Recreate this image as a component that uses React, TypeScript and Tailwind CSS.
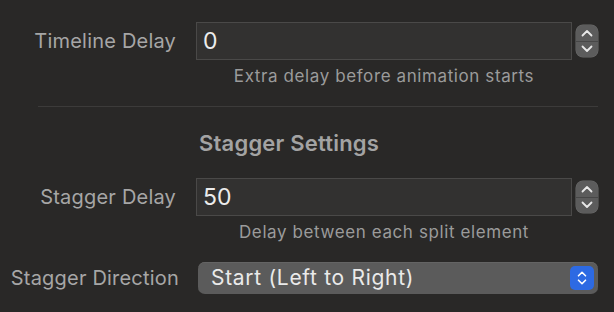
import React from 'react';

function Stepper() {
  return (
    <div className="w-[22px] h-[32px] shrink-0 rounded-[7px] bg-[#5c5c5c] flex flex-col overflow-hidden shadow-[0_0_0_0.5px_#6a6a6a]">
      <div className="flex-1 flex items-center justify-center">
        <svg width="12" height="8" viewBox="0 0 12 8" fill="none">
          <path d="M1.5 6.5 L6 2 L10.5 6.5" stroke="#e8e8e8" strokeWidth="1.8" strokeLinecap="round" strokeLinejoin="round" />
        </svg>
      </div>
      <div className="h-px bg-[#474747]" />
      <div className="flex-1 flex items-center justify-center">
        <svg width="12" height="8" viewBox="0 0 12 8" fill="none">
          <path d="M1.5 1.5 L6 6 L10.5 1.5" stroke="#e8e8e8" strokeWidth="1.8" strokeLinecap="round" strokeLinejoin="round" />
        </svg>
      </div>
    </div>
  );
}

function NumberRow({ label, value }: { label: string; value: string }) {
  return (
    <div className="flex items-center">
      <div className="w-[176px] shrink-0 text-right text-[20px] tracking-[0.2px] text-[#a6a6a6] leading-6">{label}</div>
      <div className="ml-[20px] flex-1 flex items-center gap-[4px]">
        <div className="flex-1 h-[38px] bg-[#323130] border border-[#4a4948] flex items-center pl-[6px] text-[23px] text-[#ececec]">
          {value}
        </div>
        <Stepper />
      </div>
    </div>
  );
}

function Help({ text }: { text: string }) {
  return (
    <div className="ml-[196px] w-[376px] text-center text-[17px] tracking-[0.6px] leading-5 text-[#9b9b9b]">{text}</div>
  );
}

export default function App() {
  return (
    <div className="w-[614px] h-[312px] bg-[#292827] pt-[22px] pr-[16px] font-['Inter',sans-serif] overflow-hidden">
      <NumberRow label="Timeline Delay" value="0" />
      <div className="mt-[6px]">
        <Help text="Extra delay before animation starts" />
      </div>
      <div className="mt-[20px] ml-[38px] h-px bg-[#3c3b3a]" />
      <div className="mt-[24px] ml-[199px] text-[22px] tracking-[0.2px] leading-6 font-semibold text-[#a3a3a3]">Stagger Settings</div>
      <div className="mt-[23px]">
        <NumberRow label="Stagger Delay" value="50" />
      </div>
      <div className="mt-[6px]">
        <Help text="Delay between each split element" />
      </div>
      <div className="mt-[20px] flex items-center">
        <div className="w-[179px] shrink-0 text-right text-[20px] tracking-[0.2px] text-[#a6a6a6] leading-6">Stagger Direction</div>
        <div className="ml-[19px] flex-1 h-[32px] rounded-[7px] bg-[#5b5b5b] flex items-center pl-[13px] pr-[4px] shadow-[inset_0_0.5px_0_#6e6e6e]">
          <span className="flex-1 text-[21px] tracking-[0.7px] text-[#eaeaea]">Start (Left to Right)</span>
          <div className="w-[24px] h-[24px] rounded-[5px] bg-[#2d6ae3] flex flex-col items-center justify-center gap-[2px]">
            <svg width="10" height="6" viewBox="0 0 10 6" fill="none">
              <path d="M1.5 4.8 L5 1.3 L8.5 4.8" stroke="#ffffff" strokeWidth="1.6" strokeLinecap="round" strokeLinejoin="round" />
            </svg>
            <svg width="10" height="6" viewBox="0 0 10 6" fill="none">
              <path d="M1.5 1.2 L5 4.7 L8.5 1.2" stroke="#ffffff" strokeWidth="1.6" strokeLinecap="round" strokeLinejoin="round" />
            </svg>
          </div>
        </div>
      </div>
    </div>
  );
}
